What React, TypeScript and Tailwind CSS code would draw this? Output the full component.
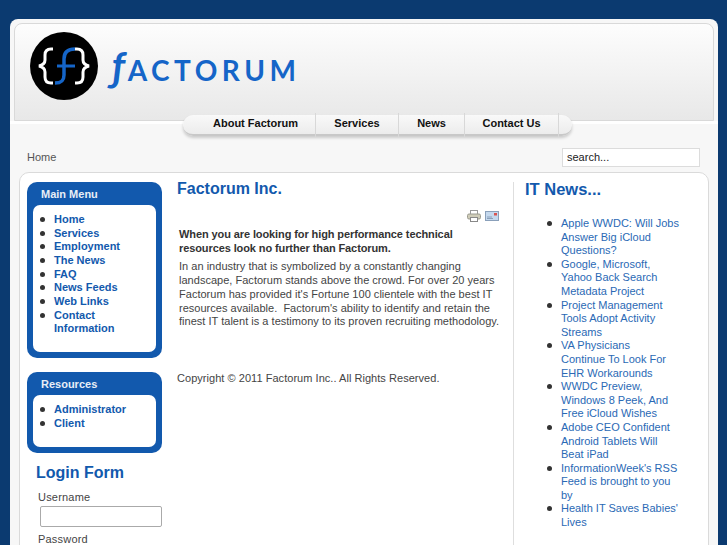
const mainMenu = ['Home', 'Services', 'Employment', 'The News', 'FAQ', 'News Feeds', 'Web Links', 'Contact Information']
const news = [
  'Apple WWDC: Will Jobs Answer Big iCloud Questions?',
  'Google, Microsoft, Yahoo Back Search Metadata Project',
  'Project Management Tools Adopt Activity Streams',
  'VA Physicians\nContinue To Look For EHR Workarounds',
  'WWDC Preview, Windows 8 Peek, And Free iCloud Wishes',
  'Adobe CEO Confident Android Tablets Will Beat iPad',
  "InformationWeek's RSS Feed is brought to you by",
  "Health IT Saves Babies' Lives",
]
const navItems = [
  { label: 'About Factorum', width: 'w-[120px]' },
  { label: 'Services', width: 'w-[83px]' },
  { label: 'News', width: 'w-[66px]' },
  { label: 'Contact Us', width: 'w-[94px]' },
]

function LogoMark() {
  return (
    <svg width="68" height="68" viewBox="0 0 68 68" className="shrink-0">
      <circle cx="34" cy="34" r="34" fill="#000" />
      <path d="M23 17h-2c-4 0-6 2-6 6v5c0 3-2 5-6 6 4 1 6 3 6 6v5c0 4 2 6 6 6h2" fill="none" stroke="#fff" strokeWidth="3" />
      <path d="M45 17h2c4 0 6 2 6 6v5c0 3 2 5 6 6-4 1-6 3-6 6v5c0 4-2 6-6 6h-2" fill="none" stroke="#fff" strokeWidth="3" />
      <path d="M45 17c-7 0-11 3-11 10v16c0 6-3 8-9 8" fill="none" stroke="#1565c8" strokeWidth="3.500" />
      <path d="M27 34h18" stroke="#1565c8" strokeWidth="3" />
    </svg>
  )
}

function PrintIcon() {
  return (
    <svg width="14" height="12" viewBox="0 0 14 12">
      <rect x="3.500" y="0.500" width="7" height="4" fill="#fff" stroke="#999" />
      <rect x="0.500" y="4" width="13" height="5" rx="1.500" fill="#cfccb8" stroke="#9a9a8e" />
      <rect x="3.500" y="7.500" width="7" height="4" fill="#fff" stroke="#888" />
    </svg>
  )
}

function MailIcon() {
  return (
    <svg width="14" height="10" viewBox="0 0 14 10" className="mt-[1px]">
      <rect x="0.500" y="0.500" width="13" height="9" fill="#c5d9ee" stroke="#8aa0ba" />
      <rect x="9" y="2" width="3" height="2.500" fill="#d9534f" />
      <path d="M2 6h5M2 7.500h6" stroke="#8aa0ba" />
    </svg>
  )
}

function Bullet({ children }: { children: string }) {
  return (
    <li className="relative whitespace-pre-line before:absolute before:top-[4px] before:-left-[14px] before:size-[5px] before:rounded-full before:bg-[#333] before:content-['']">
      {children}
    </li>
  )
}

function SideModule({ title, items, bodyClass }: { title: string; items: string[]; bodyClass: string }) {
  return (
    <div className="w-[135px] rounded-[10px] bg-[#1259ad] px-[6px] pb-[6px]">
      <h3 className="h-[23px] pl-[8px] text-[11px] leading-[25px] font-bold text-[#e8eef6]">{title}</h3>
      <ul className={`rounded-[7px] bg-white pt-[8px] pl-[21px] text-[11px] leading-[13.650px] font-bold text-[#1259ad] ${bodyClass}`}>
        {items.map((item) => (
          <Bullet key={item}>{item}</Bullet>
        ))}
      </ul>
    </div>
  )
}

export default function App() {
  return (
    <div className="h-[545px] overflow-hidden bg-[#0b3a70] pt-[19px] pl-[10px] font-['Liberation_Sans',Arial,sans-serif]">
      <div className="h-[526px] w-[708px] overflow-hidden rounded-t-[8px] bg-[#f7f7f7]">
        {/* Header */}
        <div className="border-b-[3px] border-[#fff] pt-[4px]">
          <div className="mx-[4px] flex h-[98px] items-start gap-[14px] rounded-t-[8px] border border-[#d9d9d9] bg-gradient-to-b from-[#fdfdfd] to-[#e8e8e8] pt-[8px] pl-[15px]">
            <LogoMark />
            <div className="flex items-baseline pt-[14px] font-['Lato',sans-serif] text-[28px] leading-[40px] font-bold tracking-[4.500px] text-[#1565c8]">
              <span className="pr-[3px] text-[40px] tracking-normal italic">ƒ</span>
              <span>ACTORUM</span>
            </div>
          </div>
        </div>

        {/* Nav pill */}
        <nav className="relative z-10 -mt-[9px] ml-[173px] flex h-[21px] w-[389px] items-center rounded-[10px] border-b-2 border-[#c8c8c8] bg-gradient-to-b from-[#f9f9f9] to-[#ececec] pl-[13px] shadow-[0_2px_3px_rgba(0,0,0,0.18)]">
          {navItems.map((item) => (
            <span
              key={item.label}
              className={`${item.width} border-r border-[#d8d8d8] pb-[4px] text-center text-[11px] leading-[20px] font-bold text-[#111]`}
            >
              {item.label}
            </span>
          ))}
        </nav>

        {/* Breadcrumb and search */}
        <div className="flex h-[31px] items-end justify-between pr-[18px] pl-[17px] text-[11px] text-[#555]">
          <span className="pb-[2px]">Home</span>
          <div className="h-[19px] w-[138px] border border-[#dcdcdc] bg-white pl-[4px] text-[11px] leading-[17px] text-[#222]">search...</div>
        </div>

        {/* Main card */}
        <div className="mx-[9px] mt-[5px] flex h-[400px] rounded-t-[10px] border border-[#dadada] bg-white pt-[9px] pl-[7px]">
          <div className="flex w-[135px] shrink-0 flex-col">
            <SideModule title="Main Menu" items={mainMenu} bodyClass="h-[147px]" />
            <div className="h-[14px]" />
            <SideModule title="Resources" items={['Administrator', 'Client']} bodyClass="h-[52px]" />
            <h3 className="mt-[10px] ml-[9px] text-[16px] leading-[20px] font-bold text-[#1259ad]">Login Form</h3>
            <div className="mt-[8px] pl-[11px] text-[11px] leading-[13px] tracking-[0.200px] text-[#444]">Username</div>
            <div className="mt-[2px] ml-[13px] h-[21px] w-[122px] rounded-[2px] border border-[#aaa] bg-white" />
            <div className="mt-[6px] pl-[11px] text-[11px] leading-[13px] tracking-[0.200px] text-[#444]">Password</div>
          </div>

          <main className="ml-[15px] w-[323px] shrink-0">
            <h2 className="-mt-[1px] text-[16px] leading-[16px] font-bold text-[#1259ad]">Factorum Inc.</h2>
            <div className="mt-[13px] flex justify-end gap-[4px] pr-[1px]">
              <PrintIcon />
              <MailIcon />
            </div>
            <div className="-mr-[4px] pt-[6px] pl-[2px] text-[11px] leading-[13.700px] text-[#444]">
              <p className="font-bold tracking-[-0.100px] text-[#333]">When you are looking for high performance technical resources look no further than Factorum.</p>
              <p className="mt-[5px] tracking-[0.020px]">
                In an industry that is symbolized by a constantly changing landscape, Factorum stands above the crowd. For over 20 years Factorum has provided it's Fortune 100 clientele with the best IT resources available.&nbsp; Factorum's ability to identify and retain the finest IT talent is a testimony to its proven recruiting methodology.
              </p>
            </div>
            <p className="mt-[43px] text-[11px] leading-[13px] tracking-[0.040px] text-[#444]">Copyright © 2011 Factorum Inc.. All Rights Reserved.</p>
          </main>

          <aside className="ml-[13px] flex-1 border-l border-[#dedede] pl-[11px]">
            <h2 className="-mt-[1px] text-[16.500px] leading-[17px] font-bold text-[#1259ad]">IT News...</h2>
            <ul className="mt-[19px] w-[156px] pl-[36px] text-[11px] leading-[13.600px] text-[#2a69b5]">
              {news.map((item) => (
                <Bullet key={item}>{item}</Bullet>
              ))}
            </ul>
          </aside>
        </div>
      </div>
    </div>
  )
}
